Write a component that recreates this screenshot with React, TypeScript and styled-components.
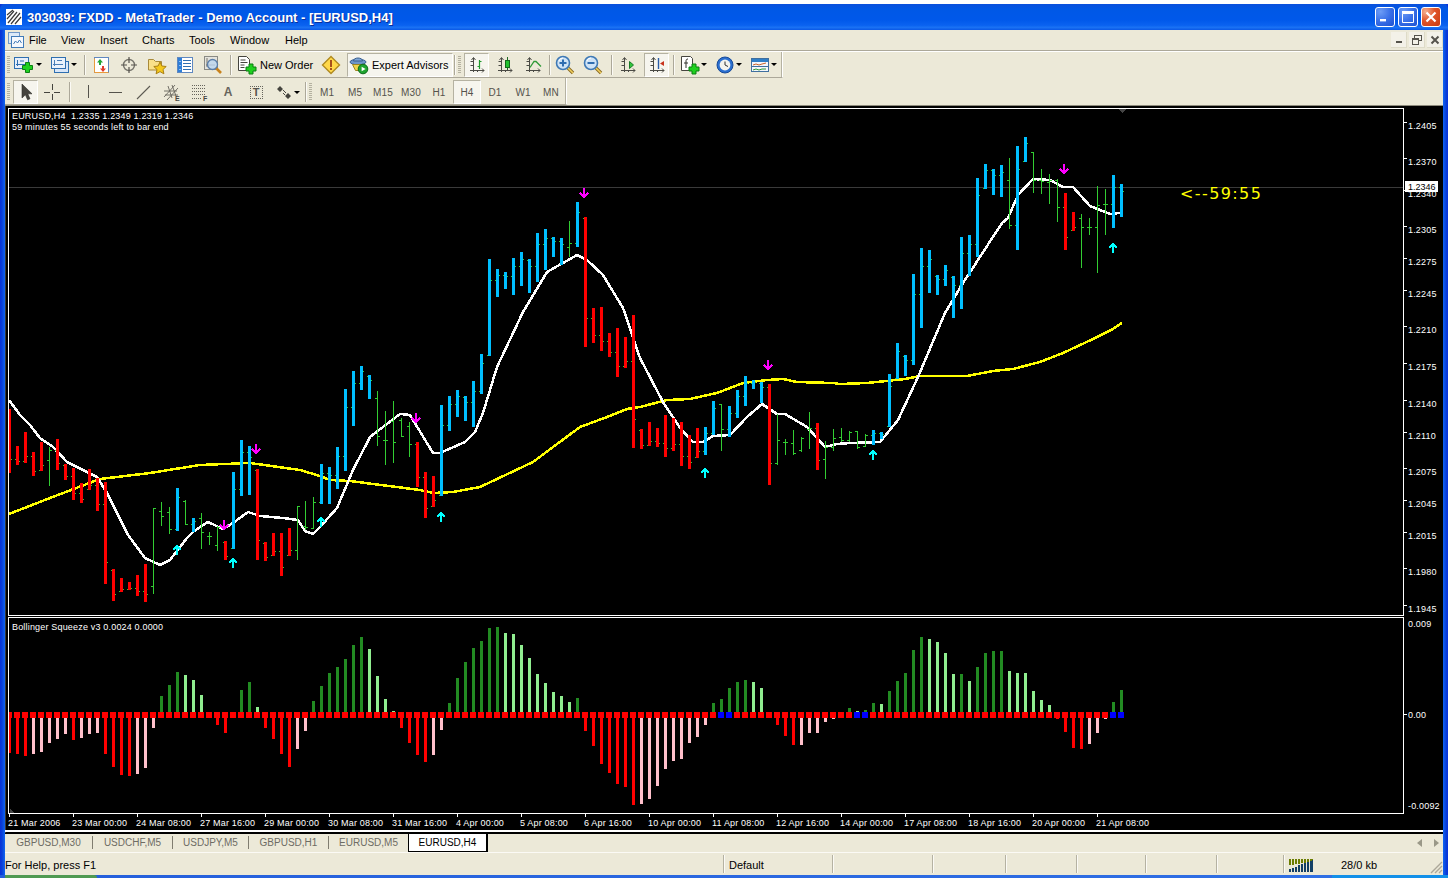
import React from "react";
import styled, { createGlobalStyle } from "styled-components";

const Global = createGlobalStyle`
  html, body { margin: 0; padding: 0; background: #fff; overflow: hidden; }
  #root { width: 1448px; height: 878px; }
`;

const uiFont = `"Liberation Sans", Arial, sans-serif`;

const Shell = styled.div`
  width: 1448px;
  height: 874px;
  margin-top: 4px;
  display: flex;
  flex-direction: column;
  font-family: ${uiFont};
  background:
    linear-gradient(90deg, #0831d9 0, #0a3fd8 2px, #0f66f2 5px, transparent 5px),
    linear-gradient(270deg, #0831d9 0, #0a3fd8 2px, #0f66f2 5px, transparent 5px),
    #0855dd;
`;
const TitleBar = styled.div`
  height: 26px;
  flex: none;
  display: flex;
  align-items: center;
  padding: 0 7px 0 6px;
  border-radius: 5px 5px 0 0;
  background: linear-gradient(180deg, #0a50dc 0, #0058e6 20%, #0058ea 60%, #0a62f0 82%, #1a72f4 90%, #0a58e6 100%);
`;
const AppBadge = styled.svg`
  width: 16px;
  height: 16px;
  flex: none;
  margin-right: 5px;
`;
const TitleText = styled.div`
  flex: 1;
  color: #fff;
  font: bold 13px ${uiFont};
  white-space: pre;
  text-shadow: 1px 1px 0 #0a2f9c;
`;
const WinButtons = styled.div`
  display: flex;
  gap: 3px;
`;
const WinButton = styled.div<{ $close?: boolean }>`
  width: 20px;
  height: 20px;
  border: 1px solid #fff;
  border-radius: 3px;
  box-sizing: border-box;
  display: flex;
  align-items: center;
  justify-content: center;
  background: ${(p) =>
    p.$close
      ? "radial-gradient(circle at 20% 20%, #f4b090 0, #e0552a 45%, #c83a10 100%)"
      : "radial-gradient(circle at 25% 20%, #6d9cf5 0, #3a70e8 50%, #1c50d0 100%)"};
`;
const Client = styled.div`
  flex: 1;
  margin: 0 5px;
  display: flex;
  flex-direction: column;
  min-height: 0;
  background: #ece9d8;
`;
const MenuBar = styled.div`
  height: 20px;
  flex: none;
  display: flex;
  align-items: center;
  padding-left: 3px;
  font-size: 11px;
  color: #000;
`;
const MenuIcon = styled.svg`
  width: 16px;
  height: 16px;
  flex: none;
  margin-right: 5px;
`;
const MenuItem = styled.span<{ $w: number }>`
  width: ${(p) => p.$w}px;
  flex: none;
`;
const MdiButtons = styled.div`
  margin-left: auto;
  display: flex;
  gap: 2px;
`;
const MdiButton = styled.div`
  width: 16px;
  height: 16px;
  display: flex;
  align-items: center;
  justify-content: center;
  background: #f3f1e8;
  border-right: 1px solid #dedbc8;
  border-bottom: 1px solid #dedbc8;
  box-sizing: border-box;
`;
const ToolRow = styled.div<{ $h: number; $ruled?: boolean }>`
  height: ${(p) => p.$h}px;
  flex: none;
  box-sizing: border-box;
  display: flex;
  ${(p) => (p.$ruled ? "border-top: 1px solid #aca899; box-shadow: inset 0 1px 0 #fff; padding-top: 1px;" : "")}
`;
const ToolStrip = styled.div<{ $w: number; $pt?: number }>`
  width: ${(p) => p.$w}px;
  box-sizing: border-box;
  display: flex;
  align-items: center;
  padding-left: 2px;
  padding-top: ${(p) => p.$pt ?? 0}px;
  border-right: 1px solid #fff;
  box-shadow: inset -1px 0 0 #b5b2a2;
  border-bottom: 1px solid #aca899;
`;
const Grip = styled.div<{ $ml?: number; $mr?: number }>`
  width: 3px;
  height: 18px;
  flex: none;
  margin: 0 ${(p) => p.$mr ?? 3}px 0 ${(p) => p.$ml ?? 0}px;
  background: repeating-linear-gradient(180deg, #b4b1a0 0 1px, #ece9d8 1px 2px);
`;
const Sep = styled.div<{ $ml?: number; $mr?: number }>`
  width: 1px;
  height: 20px;
  flex: none;
  margin: 0 ${(p) => p.$mr ?? 1}px 0 ${(p) => p.$ml ?? 3}px;
  background: #aca899;
  border-right: 1px solid #fbfaf5;
`;
const ToolButton = styled.div<{ $w: number; $pl?: number; $ml?: number; $on?: boolean }>`
  width: ${(p) => p.$w}px;
  height: 24px;
  box-sizing: border-box;
  flex: none;
  display: flex;
  align-items: center;
  justify-content: ${(p) => (p.$pl === undefined ? "center" : "flex-start")};
  padding-left: ${(p) => p.$pl ?? 0}px;
  margin-left: ${(p) => p.$ml ?? 0}px;
  font-size: 11px;
  color: #000;
  ${(p) =>
    p.$on
      ? `background: #f6f5ee; border: 1px solid; border-color: #b5b2a2 #fff #fff #b5b2a2;
         padding-left: ${p.$pl === undefined ? 0 : Math.max(0, p.$pl - 1)}px;`
      : ""}
`;
const ToolLabel = styled.span`
  margin-left: 3px;
  white-space: nowrap;
`;
const Caret = styled.span<{ $ml?: number }>`
  width: 0;
  height: 0;
  flex: none;
  margin-left: ${(p) => p.$ml ?? 1}px;
  border-left: 3px solid transparent;
  border-right: 3px solid transparent;
  border-top: 3px solid #000;
`;
const TimeFrame = styled(ToolButton)`
  font-size: 10px;
  color: #55534c;
  letter-spacing: 0.1px;
`;
const IconSvg = styled.svg`
  width: 20px;
  height: 20px;
  flex: none;
  display: block;
`;
const ChartArea = styled.div`
  height: 728px;
  flex: none;
  background: #000;
  border-top: 1px solid #8d8a7c;
  box-sizing: border-box;
`;
const ChartSvg = styled.svg`
  display: block;
  width: 1438px;
  height: 727px;
`;
const AxisText = styled.text`
  fill: #fff;
  font: 9px ${uiFont};
  letter-spacing: 0.18px;
  white-space: pre;
`;
const TimerText = styled.text`
  fill: #ffff00;
  font: 16px "DejaVu Sans", sans-serif;
  letter-spacing: 1.4px;
`;
const Tabs = styled.div`
  height: 20px;
  flex: none;
  box-sizing: border-box;
  border-top: 1px solid #000;
  border-bottom: 1px solid #fbfaf5;
  display: flex;
  align-items: stretch;
  font-size: 10px;
`;
const Tab = styled.div<{ $w: number; $sep?: boolean }>`
  width: ${(p) => p.$w}px;
  flex: none;
  box-sizing: border-box;
  display: flex;
  align-items: center;
  justify-content: center;
  color: #6e6c64;
  margin: 2px 0 3px;
  border-left: ${(p) => (p.$sep ? "1px solid #807d70" : "none")};
`;
const ActiveTab = styled.div`
  width: 80px;
  flex: none;
  box-sizing: border-box;
  margin-top: -1px;
  height: 19px;
  background: #fff;
  color: #000;
  display: flex;
  align-items: center;
  justify-content: center;
  border: 1px solid #000;
  border-right-width: 2px;
`;
const TabScroll = styled.div`
  margin-left: auto;
  margin-right: 4px;
  display: flex;
  align-items: center;
  gap: 12px;
`;
const StatusBar = styled.div`
  height: 21px;
  flex: none;
  position: relative;
  display: flex;
  align-items: stretch;
  font-size: 11px;
  color: #000;
`;
const StatusCell = styled.div<{ $w: number; $ruled?: boolean; $pl?: number }>`
  width: ${(p) => p.$w}px;
  flex: none;
  box-sizing: border-box;
  display: flex;
  align-items: center;
  padding-left: ${(p) => p.$pl ?? 5}px;
  padding-top: 2px;
  margin: 2px 0 1px;
  ${(p) => (p.$ruled ? "border-left: 1px solid #b5b2a2; box-shadow: inset 1px 0 0 #fbfaf5;" : "")}
`;
const ResizeGrip = styled.svg`
  position: absolute;
  right: 0;
  bottom: 0;
  width: 14px;
  height: 14px;
`;
const Taskbar = styled.div`
  height: 3px;
  flex: none;
  position: relative;
  background: linear-gradient(90deg, #245edb 0, #2f6fe4 92%, #1290e8 92%, #1290e8 100%);
`;
const StartStub = styled.div`
  width: 92px;
  height: 3px;
  margin-left: 5px;
  border-radius: 0 4px 0 0;
  background: #4f9a52;
`;
const Root = styled.div`
  width: 1448px;
  height: 878px;
`;

/* ---------- icons ---------- */
const Plus = ({ x, y }: { x: number; y: number }) => (
  <path
    d={`M${x + 3.5} ${y + 0.5}h4v3h3v4h-3v3h-4v-3h-3v-4h3z`}
    fill="#1fd01f"
    stroke="#0b7f12"
  />
);
const Axes = () => (
  <path
    d="M6.5 3v14M3 15.5h14M4.5 5l2-2.5 2 2.5M15 13.5l2 2-2 2M3.5 6.5h3M3.5 10.5h3M10.5 15v2M14.5 15v0"
    fill="none"
    stroke="#4a4a44"
  />
);
const Glass = ({ sign }: { sign: "+" | "-" }) => (
  <IconSvg viewBox="0 0 20 20">
    <path d="M12 12l6 6" stroke="#8a6a20" strokeWidth="3.4" />
    <path d="M12.5 12.5l5.5 5.5" stroke="#f2d060" strokeWidth="1.6" />
    <circle cx="8" cy="8" r="6.5" fill="#cfe3f6" stroke="#3f79b5" strokeWidth="1.6" />
    <path d="M4 6a4 4 0 0 1 4-3" fill="none" stroke="#fff" />
    <path d={sign === "+" ? "M8 4.5v7M4.5 8h7" : "M4.5 8h7"} stroke="#2f6db0" strokeWidth="2" />
  </IconSvg>
);

const IconNewChart = () => (
  <IconSvg viewBox="0 0 20 20">
    <rect x="0.5" y="2.5" width="14" height="11" fill="#e6eefa" stroke="#2f6fb0" />
    <path d="M3.5 5v6M2 9.5h10M6 6h4" stroke="#2f6fb0" fill="none" />
    <Plus x={8} y={7} />
  </IconSvg>
);
const IconProfile = () => (
  <IconSvg viewBox="0 0 20 20">
    <rect x="4.5" y="6.5" width="14" height="11" fill="#d8e6f8" stroke="#2f6fb0" />
    <rect x="1.5" y="2.5" width="14" height="11" fill="#eaf2fc" stroke="#2f6fb0" />
    <path d="M4.5 5v6M3 9.5h10M7 5.5h5" stroke="#4a7fb8" fill="none" />
  </IconSvg>
);
const IconMarket = () => (
  <IconSvg viewBox="0 0 20 20">
    <rect x="3.5" y="2.5" width="14" height="15" fill="#fff" stroke="#5f88c0" />
    <path d="M3.5 3.5v14h14" fill="none" stroke="#e89a3c" />
    <path d="M9 4l3 3.5h-2V10H8V7.5H6z" fill="#21a536" />
    <path d="M12 17l-3-3.5h2V11h2v2.5h2z" fill="#e03a2a" />
  </IconSvg>
);
const IconNavigator = () => (
  <IconSvg viewBox="0 0 20 20">
    <circle cx="10" cy="10" r="5.5" fill="none" stroke="#76746c" strokeWidth="1.4" />
    <path d="M10 2v6M10 12v6M2 10h6M12 10h6" stroke="#55534c" strokeWidth="1.2" />
  </IconSvg>
);
const IconFolderStar = () => (
  <IconSvg viewBox="0 0 20 20">
    <path d="M1.5 15V4.5h5l2 2h6V15z" fill="#f9e08a" stroke="#a88a3a" />
    <path d="M13 7l1.9 4 4.3.5-3.2 3 .9 4.3-3.9-2.2-3.9 2.2.9-4.3-3.2-3 4.3-.5z" fill="#f4c81c" stroke="#a97f12" />
  </IconSvg>
);
const IconTerminal = () => (
  <IconSvg viewBox="0 0 20 20">
    <rect x="2.5" y="2.5" width="15" height="15" fill="#fff" stroke="#5f88c0" />
    <rect x="3" y="3" width="4" height="14" fill="#2f7fd8" />
    <path d="M8 5.5h8M8 8.5h8M8 11.5h8M8 14.5h8" stroke="#2f6fb0" />
    <path d="M5 6v1M5 10v1M5 14v1" stroke="#fff" />
  </IconSvg>
);
const IconTester = () => (
  <IconSvg viewBox="0 0 20 20">
    <rect x="1.5" y="1.5" width="13" height="13" fill="#e4e3dc" stroke="#8a8a84" />
    <path d="M4 3v9M3 10h9" stroke="#76746c" />
    <path d="M13 13l5 5" stroke="#c8821c" strokeWidth="2.6" />
    <circle cx="9.5" cy="9.5" r="5" fill="#bcd6f0" fillOpacity=".8" stroke="#5b7ea8" strokeWidth="1.3" />
  </IconSvg>
);
const IconNewOrder = () => (
  <IconSvg viewBox="0 0 20 20">
    <path d="M1.5 1.5h8l3 3v11h-11z" fill="#fff" stroke="#45443e" />
    <path d="M3.5 5h5M3.5 7.5h7M3.5 10h4M3.5 12.5h4" stroke="#45443e" />
    <Plus x={8.5} y={8.5} />
  </IconSvg>
);
const IconDiamond = () => (
  <IconSvg viewBox="0 0 20 20">
    <path d="M10 1.5L18.5 10 10 18.5 1.5 10z" fill="#ffd84a" stroke="#b08a20" strokeWidth="1.4" />
    <path d="M10 5v7" stroke="#a8501c" strokeWidth="2" />
    <path d="M10 13v2" stroke="#a8501c" strokeWidth="2" />
  </IconSvg>
);
const IconExpert = () => (
  <IconSvg viewBox="0 0 20 20">
    <ellipse cx="9" cy="7" rx="8" ry="2.8" fill="#6d96c8" stroke="#3a5f90" />
    <path d="M4.5 6c0-4 9-4 9 0z" fill="#7ea6d6" stroke="#3a5f90" />
    <path d="M3.5 9.5h11l-2 6h-6z" fill="#f0d44a" stroke="#9a8420" />
    <circle cx="14" cy="14" r="4.8" fill="#1fa32f" stroke="#0b6a18" />
    <path d="M12.6 11.8l4 2.2-4 2.2z" fill="#fff" />
  </IconSvg>
);
const IconBars = () => (
  <IconSvg viewBox="0 0 20 20">
    <Axes />
    <path d="M12.5 5v9M10.5 11.5h2M12.5 6.5h2" stroke="#1f9a2a" strokeWidth="1.2" fill="none" />
  </IconSvg>
);
const IconCandles = () => (
  <IconSvg viewBox="0 0 20 20">
    <Axes />
    <path d="M12.5 2v13" stroke="#1c6a22" />
    <rect x="10.5" y="5.5" width="4" height="7" fill="#22c22e" stroke="#136a1a" />
  </IconSvg>
);
const IconLine = () => (
  <IconSvg viewBox="0 0 20 20">
    <Axes />
    <path d="M7 12.5l4-6 2 0 5 5" fill="none" stroke="#2e9a36" strokeWidth="1.3" />
  </IconSvg>
);
const IconAuto = () => (
  <IconSvg viewBox="0 0 20 20">
    <Axes />
    <path d="M11.5 6.5l4 3.5-4 3.5z" fill="#31c53d" stroke="#1a7a26" />
  </IconSvg>
);
const IconShift = () => (
  <IconSvg viewBox="0 0 20 20">
    <Axes />
    <path d="M11.5 3v11" stroke="#2a5da8" strokeWidth="1.4" />
    <path d="M13 8.5l4-2.5v5z" fill="#c8321c" />
  </IconSvg>
);
const IconPlusDoc = () => (
  <IconSvg viewBox="0 0 20 20">
    <path d="M1.5 1.5h9l2 2v12h-11z" fill="#fff" stroke="#45443e" />
    <path d="M8 4c-2 0-2 1-2 3v6M4 8h4" fill="none" stroke="#33322c" />
    <Plus x={8.5} y={8.5} />
  </IconSvg>
);
const IconClock = () => (
  <IconSvg viewBox="0 0 20 20">
    <circle cx="10" cy="10" r="8" fill="#2a6fd0" stroke="#174a98" />
    <circle cx="10" cy="10" r="5.4" fill="#f4f3ee" />
    <path d="M10 6.5V10l3 1.5" fill="none" stroke="#333" />
  </IconSvg>
);
const IconTemplate = () => (
  <IconSvg viewBox="0 0 20 20">
    <rect x="1.5" y="3.5" width="17" height="13" fill="#f3f7fb" stroke="#3f6f9f" />
    <rect x="2" y="4" width="16" height="3" fill="#2f7fc8" />
    <path d="M3 10l3-1 3 1 3-1 4-1" fill="none" stroke="#c8632a" />
    <path d="M2 11.5h16" stroke="#3f6f9f" />
    <path d="M3 15l3-1 3 1 3-1 4 0" fill="none" stroke="#2e9a36" />
  </IconSvg>
);
const IconCursor = () => (
  <IconSvg viewBox="0 0 20 20">
    <path d="M6 2v14l3.4-3.2 2.2 5 2.4-1-2.2-5H16z" fill="#45443e" stroke="#2e2d29" strokeWidth=".6" />
  </IconSvg>
);
const IconCross = () => (
  <IconSvg viewBox="0 0 20 20" shapeRendering="crispEdges">
    <path d="M10 2v6M10 12v6M2 10h6M12 10h6" stroke="#45443e" />
  </IconSvg>
);
const IconV = () => (
  <IconSvg viewBox="0 0 20 20" shapeRendering="crispEdges">
    <path d="M10 3v13" stroke="#55534c" />
  </IconSvg>
);
const IconH = () => (
  <IconSvg viewBox="0 0 20 20" shapeRendering="crispEdges">
    <path d="M3 10h13" stroke="#55534c" />
  </IconSvg>
);
const IconTrend = () => (
  <IconSvg viewBox="0 0 20 20">
    <path d="M3 17L16 4" stroke="#5c5a52" strokeWidth="1.1" />
  </IconSvg>
);
const IconChannel = () => (
  <IconSvg viewBox="0 0 20 20">
    <path d="M2 15L13 3M5 18L16 6M2 9h13M3 13h13M6 4l4 12M10 3l4 11" stroke="#66645c" strokeWidth=".9" fill="none" />
    <text x="13" y="19" fontSize="7" fontWeight="700" fontFamily="Liberation Sans" fill="#45443e">E</text>
  </IconSvg>
);
const IconFibo = () => (
  <IconSvg viewBox="0 0 20 20" shapeRendering="crispEdges">
    <path d="M2 3.5h14M2 6.5h14M2 9.5h14M2 12.5h14M2 16.5h9" stroke="#66645c" strokeDasharray="1 1" />
    <text x="13" y="19" fontSize="7" fontWeight="700" fontFamily="Liberation Sans" fill="#45443e">F</text>
  </IconSvg>
);
const LetterA = styled.span`
  font: bold 12px ${uiFont};
  color: #66645c;
`;
const LetterT = styled.span`
  width: 13px;
  height: 13px;
  box-sizing: border-box;
  display: flex;
  align-items: center;
  justify-content: center;
  font: bold 11px ${uiFont};
  color: #55534c;
  border: 1px dotted #66645c;
`;
const IconArrows = () => (
  <IconSvg viewBox="0 0 20 20">
    <path d="M6 4l3 3-3 3-3-3zM14 11l3 3-3 3-3-3z" fill="#45443e" />
    <path d="M9 8l3 3M11 13l-2-2" stroke="#45443e" />
  </IconSvg>
);

/* ---------- chart data (read off the picture) ---------- */
type Row = [string, number, number, number?, number?];

const section = (base: number, rows: Row[]) =>
  rows.map(([c, t, b, o, cl]) => ({
    c,
    t: base + t / 3,
    b: base + b / 3,
    o: o === undefined ? undefined : base + o / 3,
    cl: cl === undefined ? undefined : base + cl / 3,
  }));

const bars = [
  ...section(390, [
    ["r", 57, 249], ["r", 168, 225], ["r", 126, 219], ["r", 186, 258], ["r", 156, 243],
    ["g", 171, 288, 210, 180], ["r", 147, 240], ["r", 222, 270], ["r", 234, 330], ["r", 279, 339],
    ["r", 237, 300], ["r", 264, 363], ["r", 276, 582], ["r", 537, 633], ["r", 564, 606],
    ["r", 576, 600], ["r", 555, 618], ["r", 522, 636], ["g", 354, 612, 588, 354], ["g", 336, 408, 364, 378],
    ["g", 351, 432, 367, 418], ["b", 294, 423], ["g", 330, 405, 333, 403], ["b", 384, 426],
    ["g", 369, 477, 384, 425], ["g", 426, 465, 438, 438], ["g", 408, 483, 465, 410], ["r", 453, 510],
    ["b", 246, 477], ["b", 150, 318], ["b", 168, 315], ["r", 237, 510], ["r", 456, 513],
    ["r", 429, 498], ["r", 429, 558], ["r", 414, 498], ["g", 348, 510, 480, 348],
    ["g", 333, 420, 408, 412], ["g", 321, 417, 415, 335],
  ]),
  ...section(180, [
    ["b", 852, 972], ["b", 861, 972], ["b", 801, 927], ["b", 627, 873], ["b", 573, 738],
    ["b", 558, 630], ["b", 585, 657], ["g", 633, 798, 654, 768], ["g", 693, 855, 780, 780],
    ["g", 663, 849, 723, 785], ["g", 714, 771, 720, 768], ["g", 726, 831, 738, 792],
    ["r", 786, 921], ["r", 876, 1014], ["r", 888, 981], ["b", 675, 948], ["b", 648, 753],
    ["b", 630, 711], ["b", 648, 723], ["b", 603, 741], ["b", 522, 642], ["b", 237, 528],
    ["b", 267, 351], ["b", 276, 327], ["b", 234, 345], ["b", 216, 318], ["b", 237, 339],
    ["b", 159, 306], ["b", 147, 270], ["b", 171, 231], ["b", 174, 255], ["g", 123, 231, 201, 189],
    ["b", 66, 201], ["r", 111, 501], ["r", 384, 489], ["r", 381, 513], ["r", 459, 531],
    ["r", 444, 591], ["r", 471, 564], ["r", 405, 804],
  ]),
  ...section(340, [
    ["r", 267, 327], ["r", 246, 318], ["r", 264, 321], ["r", 225, 351], ["r", 234, 333],
    ["r", 246, 378], ["r", 285, 387], ["r", 264, 354], ["b", 261, 345], ["b", 183, 285],
    ["g", 192, 333, 192, 267], ["b", 198, 291], ["b", 150, 234], ["b", 108, 198], ["b", 120, 147],
    ["b", 126, 189], ["r", 132, 435], ["g", 222, 375, 370, 300], ["g", 297, 345, 306, 306],
    ["g", 270, 345, 309, 339], ["g", 291, 336, 330, 294], ["g", 216, 327, 267, 264], ["r", 249, 390],
    ["g", 303, 417, 357, 321], ["g", 267, 333, 321, 295], ["g", 264, 306, 292, 300],
    ["g", 273, 306, 300, 276], ["g", 273, 327, 273, 322], ["g", 282, 321, 318, 285],
    ["b", 270, 315], ["b", 276, 297], ["b", 102, 261],
  ]),
  ...section(130, [
    ["b", 639, 747], ["b", 675, 738], ["b", 432, 705], ["b", 354, 594], ["b", 360, 489],
    ["b", 435, 495], ["b", 405, 468], ["b", 438, 564], ["b", 321, 537], ["b", 315, 438],
    ["b", 144, 381], ["b", 102, 177], ["b", 117, 195], ["b", 105, 201], ["g", 84, 297, 150, 285],
    ["b", 48, 360], ["b", 21, 96], ["g", 66, 189, 66, 150], ["g", 117, 192, 150, 154],
    ["g", 132, 222, 155, 150], ["g", 147, 276, 150, 230], ["r", 189, 360], ["r", 246, 303],
    ["g", 252, 414, 265, 292], ["g", 264, 315, 290, 290], ["g", 168, 429, 290, 225],
    ["g", 177, 315, 223, 222], ["b", 135, 294], ["b", 162, 261],
  ]),
];

const yellow: [number, number][] = [
  [9, 514], [50, 498], [100, 479], [150, 473], [200, 465], [250, 463], [300, 470], [320, 476], [330, 480],
  [350, 481], [420, 490], [433, 493], [453, 492], [480, 487], [533, 462], [553, 447], [580, 427], [607, 417],
  [627, 409], [640, 407], [667, 400], [690, 399], [717, 393], [743, 383], [767, 380], [783, 379], [797, 382],
  [833, 383], [840, 384], [867, 383], [905, 379], [920, 376], [967, 376], [993, 371], [1013, 369], [1040, 362],
  [1063, 353], [1093, 339], [1113, 329], [1122, 323],
];
const white: [number, number][] = [
  [9, 400], [20, 415], [30, 425], [40, 438], [53, 447], [67, 462], [83, 470], [97, 477], [107, 493], [128, 535],
  [145, 558], [160, 565], [170, 560], [187, 538], [193, 532], [208, 522], [223, 529], [233, 523], [248, 512],
  [260, 516], [283, 518], [298, 520], [305, 531], [313, 534], [320, 527], [337, 508], [353, 470], [370, 437],
  [400, 414], [410, 415], [433, 453], [440, 453], [465, 442], [475, 432], [483, 413], [497, 367], [523, 312],
  [547, 272], [577, 255], [587, 260], [603, 275], [623, 308], [640, 358], [663, 402], [680, 428], [693, 442],
  [703, 442], [713, 436], [730, 435], [747, 417], [762, 404], [777, 414], [785, 414], [807, 427], [825, 447],
  [837, 444], [850, 443], [880, 442], [898, 420], [918, 377], [945, 313], [963, 283], [1002, 223], [1008, 218],
  [1018, 195], [1033, 179], [1050, 180], [1063, 187], [1073, 187], [1090, 206], [1110, 214], [1120, 213],
];
const downArrows: [number, number][] = [[256, 449], [224, 525], [416, 418], [584, 193], [768, 365], [1064, 169]];
const upArrows: [number, number][] = [[177, 550], [233, 563], [321, 522], [441, 517], [705, 473], [873, 455], [1113, 248]];

const histRows: [string, number][] = [
  ["r", 399], ["r", 402], ["r", 408], ["p", 402], ["p", 396], ["p", 369], ["p", 357], ["p", 342], ["r", 360], ["p", 354],
  ["p", 342], ["p", 339], ["r", 402], ["r", 441], ["r", 465], ["r", 468], ["p", 462], ["p", 444], ["p", 324], ["g", 228],
  ["g", 195], ["g", 156], ["l", 165], ["l", 180], ["l", 225], ["n", 0], ["r", 315], ["r", 339], ["n", 0], ["g", 210],
  ["g", 186], ["l", 261], ["r", 324], ["r", 357], ["r", 402], ["r", 441], ["p", 387], ["p", 333], ["g", 243], ["g", 198],
  ["g", 159], ["g", 141], ["g", 117], ["g", 75], ["g", 51], ["l", 87], ["l", 168], ["l", 237], ["l", 273],
  ["r", 324], ["r", 369], ["r", 405], ["r", 426], ["p", 405], ["p", 330], ["g", 249], ["g", 174], ["g", 126], ["g", 84],
  ["g", 63], ["g", 24], ["g", 21], ["l", 39], ["l", 42], ["l", 75], ["l", 114], ["l", 162], ["l", 189], ["l", 216],
  ["l", 228], ["l", 246], ["g", 234], ["r", 333], ["r", 378], ["r", 432], ["r", 459], ["r", 492], ["r", 501], ["r", 555],
  ["p", 552], ["p", 537], ["p", 498], ["p", 447], ["p", 423], ["p", 417], ["p", 369], ["p", 351], ["p", 315], ["g", 249],
  ["g", 237], ["g", 204], ["g", 186], ["g", 180], ["l", 186], ["l", 204], ["n", 0], ["r", 315], ["r", 348], ["r", 375],
  ["p", 375], ["p", 339], ["p", 339], ["p", 306], ["p", 297], ["n", 0], ["g", 264], ["l", 273], ["g", 270], ["g", 249],
  ["l", 252], ["g", 213], ["g", 183], ["g", 159], ["g", 90], ["g", 51], ["l", 57], ["l", 66], ["l", 99], ["l", 162],
  ["g", 162], ["l", 183], ["g", 141], ["g", 99], ["g", 93], ["g", 93], ["l", 153], ["l", 159], ["l", 159], ["l", 213],
  ["l", 240], ["l", 255], ["r", 297], ["r", 336], ["r", 384], ["r", 387], ["p", 372], ["p", 339], ["p", 297], ["g", 246],
  ["g", 210],
];
const histColor: Record<string, string> = { r: "#ff0000", p: "#ffc0cb", g: "#228b22", l: "#90ee90" };
const blueSquares = new Set([89, 90, 106, 107, 138, 139]);

const priceLabels: [string, number][] = [
  ["1.2405", 126], ["1.2370", 162], ["1.2340", 194], ["1.2305", 230], ["1.2275", 262], ["1.2245", 294],
  ["1.2210", 330], ["1.2175", 367], ["1.2140", 404], ["1.2110", 436], ["1.2075", 472], ["1.2045", 504],
  ["1.2015", 536], ["1.1980", 572], ["1.1945", 609],
];
const timeLabels = [
  "21 Mar 2006", "23 Mar 00:00", "24 Mar 08:00", "27 Mar 16:00", "29 Mar 00:00", "30 Mar 08:00",
  "31 Mar 16:00", "4 Apr 00:00", "5 Apr 08:00", "6 Apr 16:00", "10 Apr 00:00", "11 Apr 08:00",
  "12 Apr 16:00", "14 Apr 00:00", "17 Apr 08:00", "18 Apr 16:00", "20 Apr 00:00", "21 Apr 08:00",
];

const pts = (a: [number, number][]) => a.map((p) => p.join(",")).join(" ");
const clampTo = (v: number, a: number, b: number) => Math.min(b, Math.max(a, v));

const Chart = () => {
  let prevClose = 0;
  const barShapes = bars.map((bar, k) => {
    const h = bar.b - bar.t;
    const closeY = bar.cl ?? (bar.c === "b" ? bar.t + h * 0.22 : bar.t + h * 0.78);
    const openY = bar.o ?? clampTo(prevClose || bar.t + h / 2, bar.t + 1, bar.b - 1);
    prevClose = closeY;
    const x = 8 + 8 * k;
    return (
      <g key={k}>
        <rect x={x + 1} y={bar.t} width={1} height={h} fill="#32cd32" />
        <rect x={x - 1} y={Math.round(openY)} width={2} height={1} fill="#32cd32" />
        <rect x={x + 2} y={Math.round(closeY)} width={2} height={1} fill="#32cd32" />
        {bar.c !== "g" && (
          <rect x={x} y={bar.t} width={3} height={h} fill={bar.c === "b" ? "#00bfff" : "#ff0000"} />
        )}
      </g>
    );
  });

  return (
    <ChartSvg viewBox="5 106 1438 727" shapeRendering="crispEdges">
      <rect x="5" y="106" width="1438" height="727" fill="#000" />
      <rect x="9" y="187" width="1394" height="1" fill="#3a3a3a" />
      <polyline points={pts(yellow)} fill="none" stroke="#ffff00" strokeWidth="2.5" />
      <polyline points={pts(white)} fill="none" stroke="#ffffff" strokeWidth="2.5" />
      {barShapes}
      {downArrows.map(([x, y], i) => (
        <path key={i} d={`M${x} ${y - 5}V${y + 4}M${x - 4} ${y}L${x} ${y + 4}L${x + 4} ${y}`} fill="none" stroke="#ff00ff" strokeWidth="1.6" />
      ))}
      {upArrows.map(([x, y], i) => (
        <path key={i} d={`M${x} ${y + 5}V${y - 4}M${x - 4} ${y}L${x} ${y - 4}L${x + 4} ${y}`} fill="none" stroke="#00ffff" strokeWidth="1.6" />
      ))}

      {/* oscillator */}
      {histRows.map(([c, z], k) => {
        if (c === "n") return null;
        const y = 620 + z / 3;
        const x = 8 + 8 * k;
        const up = c === "g" || c === "l";
        return <rect key={k} x={x} y={up ? y : 718} width={3} height={up ? 712 - y : y - 718} fill={histColor[c]} />;
      })}
      {Array.from({ length: 140 }, (_, k) => (
        <rect key={k} x={6 + 8 * k} y={712} width={6} height={6} fill={blueSquares.has(k) ? "#0000ff" : "#ff0000"} />
      ))}

      {/* frames */}
      <rect x="5" y="106" width="1" height="727" fill="#3c3c3c" />
      <rect x="6" y="106" width="2" height="727" fill="#000" />
      <path d="M8.5 108.5H1403.5V615.5H8.5z" fill="none" stroke="#fff" />
      <path d="M8.5 617.5H1403.5V813.5H8.5z" fill="none" stroke="#fff" />
      <path d="M1118 109h8l-4 4z" fill="#444" />
      <path d="M10 808l4 4.5h-4z" fill="#444" />

      {priceLabels.map(([t, y]) => (
        <g key={t}>
          <rect x="1404" y={y - 4} width="3" height="1" fill="#fff" />
          <AxisText x="1408" y={y + 3}>{t}</AxisText>
        </g>
      ))}
      <rect x="1405" y="181" width="33" height="11" fill="#fff" />
      <text x="1408" y="190" fill="#000" fontSize="9" fontFamily="Liberation Sans">1.2346</text>
      <AxisText x="1408" y="627">0.009</AxisText>
      <AxisText x="1408" y="718">0.00</AxisText>
      <AxisText x="1408" y="809">-0.0092</AxisText>
      <rect x="1404" y="714" width="3" height="1" fill="#fff" />

      {timeLabels.map((t, i) => (
        <g key={t}>
          <rect x={9 + 64 * i} y="814" width="1" height="3" fill="#fff" />
          <AxisText x={8 + 64 * i} y="826">{t}</AxisText>
        </g>
      ))}
      <rect x="5" y="830" width="1438" height="2" fill="#fff" />

      <AxisText x="12" y="119">{"EURUSD,H4  1.2335 1.2349 1.2319 1.2346"}</AxisText>
      <AxisText x="12" y="130">59 minutes 55 seconds left to bar end</AxisText>
      <AxisText x="12" y="630">Bollinger Squeeze v3 0.0024 0.0000</AxisText>
      <TimerText x="1180" y="199">{"<--59:55"}</TimerText>
    </ChartSvg>
  );
};

export default function App() {
  return (
    <Root>
      <Global />
      <Shell>
        <TitleBar>
          <AppBadge viewBox="0 0 16 16">
            <rect width="16" height="16" fill="#fff" />
            <path d="M1 10L8 2M2 14L11 3M5 15L14 4M9 15L15 8M1 6l6-5" stroke="#3a3a3a" strokeWidth="1.2" />
          </AppBadge>
          <TitleText>303039: FXDD - MetaTrader - Demo Account - [EURUSD,H4]</TitleText>
          <WinButtons>
            <WinButton>
              <svg width="12" height="12" viewBox="0 0 12 12"><rect x="1" y="8" width="6" height="2.4" fill="#fff" /></svg>
            </WinButton>
            <WinButton>
              <svg width="14" height="14" viewBox="0 0 14 14"><path d="M1.5 3.5h11v9h-11z" fill="none" stroke="#fff" /><rect x="1" y="1" width="12" height="2.5" fill="#fff" /></svg>
            </WinButton>
            <WinButton $close>
              <svg width="12" height="12" viewBox="0 0 12 12"><path d="M1.5 1.5l9 9M10.5 1.5l-9 9" stroke="#fff" strokeWidth="2.2" /></svg>
            </WinButton>
          </WinButtons>
        </TitleBar>
        <Client>
          <MenuBar>
            <MenuIcon viewBox="0 0 16 16">
              <rect x="0.5" y="0.5" width="11" height="11" fill="#dbe9f8" stroke="#6f97c8" />
              <rect x="3.5" y="4.5" width="12" height="11" fill="#f4f8fd" stroke="#3f7ab8" />
              <path d="M5.5 12l2-3 2 2 2-3 2 3" fill="none" stroke="#3f7ab8" />
            </MenuIcon>
            <MenuItem $w={32}>File</MenuItem>
            <MenuItem $w={39}>View</MenuItem>
            <MenuItem $w={42}>Insert</MenuItem>
            <MenuItem $w={47}>Charts</MenuItem>
            <MenuItem $w={41}>Tools</MenuItem>
            <MenuItem $w={55}>Window</MenuItem>
            <MenuItem $w={30}>Help</MenuItem>
            <MdiButtons>
              <MdiButton>
                <svg width="10" height="10" viewBox="0 0 10 10" shapeRendering="crispEdges"><rect x="2" y="6" width="6" height="2" fill="#55534c" /></svg>
              </MdiButton>
              <MdiButton>
                <svg width="12" height="12" viewBox="0 0 12 12" shapeRendering="crispEdges"><path d="M1.5 5.5h6v5h-6zM3.5 3.5v-2h7v5h-3" fill="none" stroke="#55534c" /><rect x="1" y="4" width="7" height="2" fill="#55534c" /></svg>
              </MdiButton>
              <MdiButton>
                <svg width="10" height="10" viewBox="0 0 10 10"><path d="M1.5 1.5l7 7M8.5 1.5l-7 7" stroke="#55534c" strokeWidth="2" /></svg>
              </MdiButton>
            </MdiButtons>
          </MenuBar>

          <ToolRow $h={28} $ruled>
            <ToolStrip $w={778}>
              <Grip />
              <ToolButton $w={34} $pl={1}><IconNewChart /><Caret $ml={2} /></ToolButton>
              <ToolButton $w={34} $pl={3}><IconProfile /><Caret /></ToolButton>
              <Sep />
              <ToolButton $w={28}><IconMarket /></ToolButton>
              <ToolButton $w={28}><IconNavigator /></ToolButton>
              <ToolButton $w={28}><IconFolderStar /></ToolButton>
              <ToolButton $w={28}><IconTerminal /></ToolButton>
              <ToolButton $w={28}><IconTester /></ToolButton>
              <Sep />
              <ToolButton $w={84} $pl={4}><IconNewOrder /><ToolLabel>New Order</ToolLabel></ToolButton>
              <ToolButton $w={28}><IconDiamond /></ToolButton>
              <ToolButton $w={106} $pl={2} $ml={2} $on><IconExpert /><ToolLabel>Expert Advisors</ToolLabel></ToolButton>
              <Sep $ml={1} $mr={1} />
              <Grip $ml={1} />
              <ToolButton $w={25} $on><IconBars /></ToolButton>
              <ToolButton $w={28} $ml={2}><IconCandles /></ToolButton>
              <ToolButton $w={28}><IconLine /></ToolButton>
              <Sep $ml={2} $mr={0} />
              <ToolButton $w={28}><Glass sign="+" /></ToolButton>
              <ToolButton $w={28}><Glass sign="-" /></ToolButton>
              <Sep $ml={4} $mr={1} />
              <ToolButton $w={28}><IconAuto /></ToolButton>
              <ToolButton $w={25} $ml={2} $on><IconShift /></ToolButton>
              <Sep $ml={4} $mr={0} />
              <ToolButton $w={36} $pl={5}><IconPlusDoc /><Caret /></ToolButton>
              <ToolButton $w={33} $pl={4}><IconClock /><Caret /></ToolButton>
              <ToolButton $w={36} $pl={6}><IconTemplate /><Caret /></ToolButton>
            </ToolStrip>
          </ToolRow>

          <ToolRow $h={27}>
            <ToolStrip $w={562} $pt={2}>
              <Grip />
              <ToolButton $w={25} $on><IconCursor /></ToolButton>
              <ToolButton $w={28}><IconCross /></ToolButton>
              <Sep />
              <ToolButton $w={28} $ml={2}><IconV /></ToolButton>
              <ToolButton $w={28}><IconH /></ToolButton>
              <ToolButton $w={28}><IconTrend /></ToolButton>
              <ToolButton $w={28}><IconChannel /></ToolButton>
              <ToolButton $w={28}><IconFibo /></ToolButton>
              <ToolButton $w={28}><LetterA>A</LetterA></ToolButton>
              <ToolButton $w={28}><LetterT>T</LetterT></ToolButton>
              <ToolButton $w={34} $pl={4}><IconArrows /><Caret $ml={0} /></ToolButton>
              <Sep $ml={1} $mr={1} />
              <Grip $ml={1} $mr={1} />
              <TimeFrame $w={28}>M1</TimeFrame>
              <TimeFrame $w={28}>M5</TimeFrame>
              <TimeFrame $w={28}>M15</TimeFrame>
              <TimeFrame $w={28}>M30</TimeFrame>
              <TimeFrame $w={28}>H1</TimeFrame>
              <TimeFrame $w={28} $on>H4</TimeFrame>
              <TimeFrame $w={28}>D1</TimeFrame>
              <TimeFrame $w={28}>W1</TimeFrame>
              <TimeFrame $w={28}>MN</TimeFrame>
            </ToolStrip>
          </ToolRow>

          <ChartArea>
            <Chart />
          </ChartArea>

          <Tabs>
            <Tab $w={87}>GBPUSD,M30</Tab>
            <Tab $w={80} $sep>USDCHF,M5</Tab>
            <Tab $w={76} $sep>USDJPY,M5</Tab>
            <Tab $w={80} $sep>GBPUSD,H1</Tab>
            <Tab $w={80} $sep>EURUSD,M5</Tab>
            <ActiveTab>EURUSD,H4</ActiveTab>
            <TabScroll>
              <svg width="5" height="8" viewBox="0 0 5 8"><path d="M5 0v8L0 4z" fill="#9a9888" /></svg>
              <svg width="5" height="8" viewBox="0 0 5 8"><path d="M0 0v8l5-4z" fill="#9a9888" /></svg>
            </TabScroll>
          </Tabs>

          <StatusBar>
            <StatusCell $w={718} $pl={0}>For Help, press F1</StatusCell>
            <StatusCell $w={109} $ruled>Default</StatusCell>
            <StatusCell $w={100} $ruled />
            <StatusCell $w={73} $ruled />
            <StatusCell $w={71} $ruled />
            <StatusCell $w={69} $ruled />
            <StatusCell $w={71} $ruled />
            <StatusCell $w={67} $ruled />
            <StatusCell $w={58} $ruled>
              <svg width="24" height="13" viewBox="0 0 24 13" shapeRendering="crispEdges">
                {Array.from({ length: 9 }, (_, i) => (
                  <g key={i}>
                    <rect x={i * 3 - (i > 7 ? 1 : 0)} y={0} width={2} height={6 - i * 0.4} fill="#6b7d00" />
                    <rect x={i * 3 - (i > 7 ? 1 : 0)} y={Math.max(1, 10 - i * 1.2)} width={2} height={13 - Math.max(1, 10 - i * 1.2)} fill="#123f66" />
                  </g>
                ))}
              </svg>
            </StatusCell>
            <StatusCell $w={100} $pl={0}>28/0 kb</StatusCell>
            <ResizeGrip viewBox="0 0 14 14">
              <path d="M13 2L2 13M13 6L6 13M13 10l-3 3" stroke="#aca899" strokeWidth="1.4" />
            </ResizeGrip>
          </StatusBar>
        </Client>
        <Taskbar>
          <StartStub />
        </Taskbar>
      </Shell>
    </Root>
  );
}
